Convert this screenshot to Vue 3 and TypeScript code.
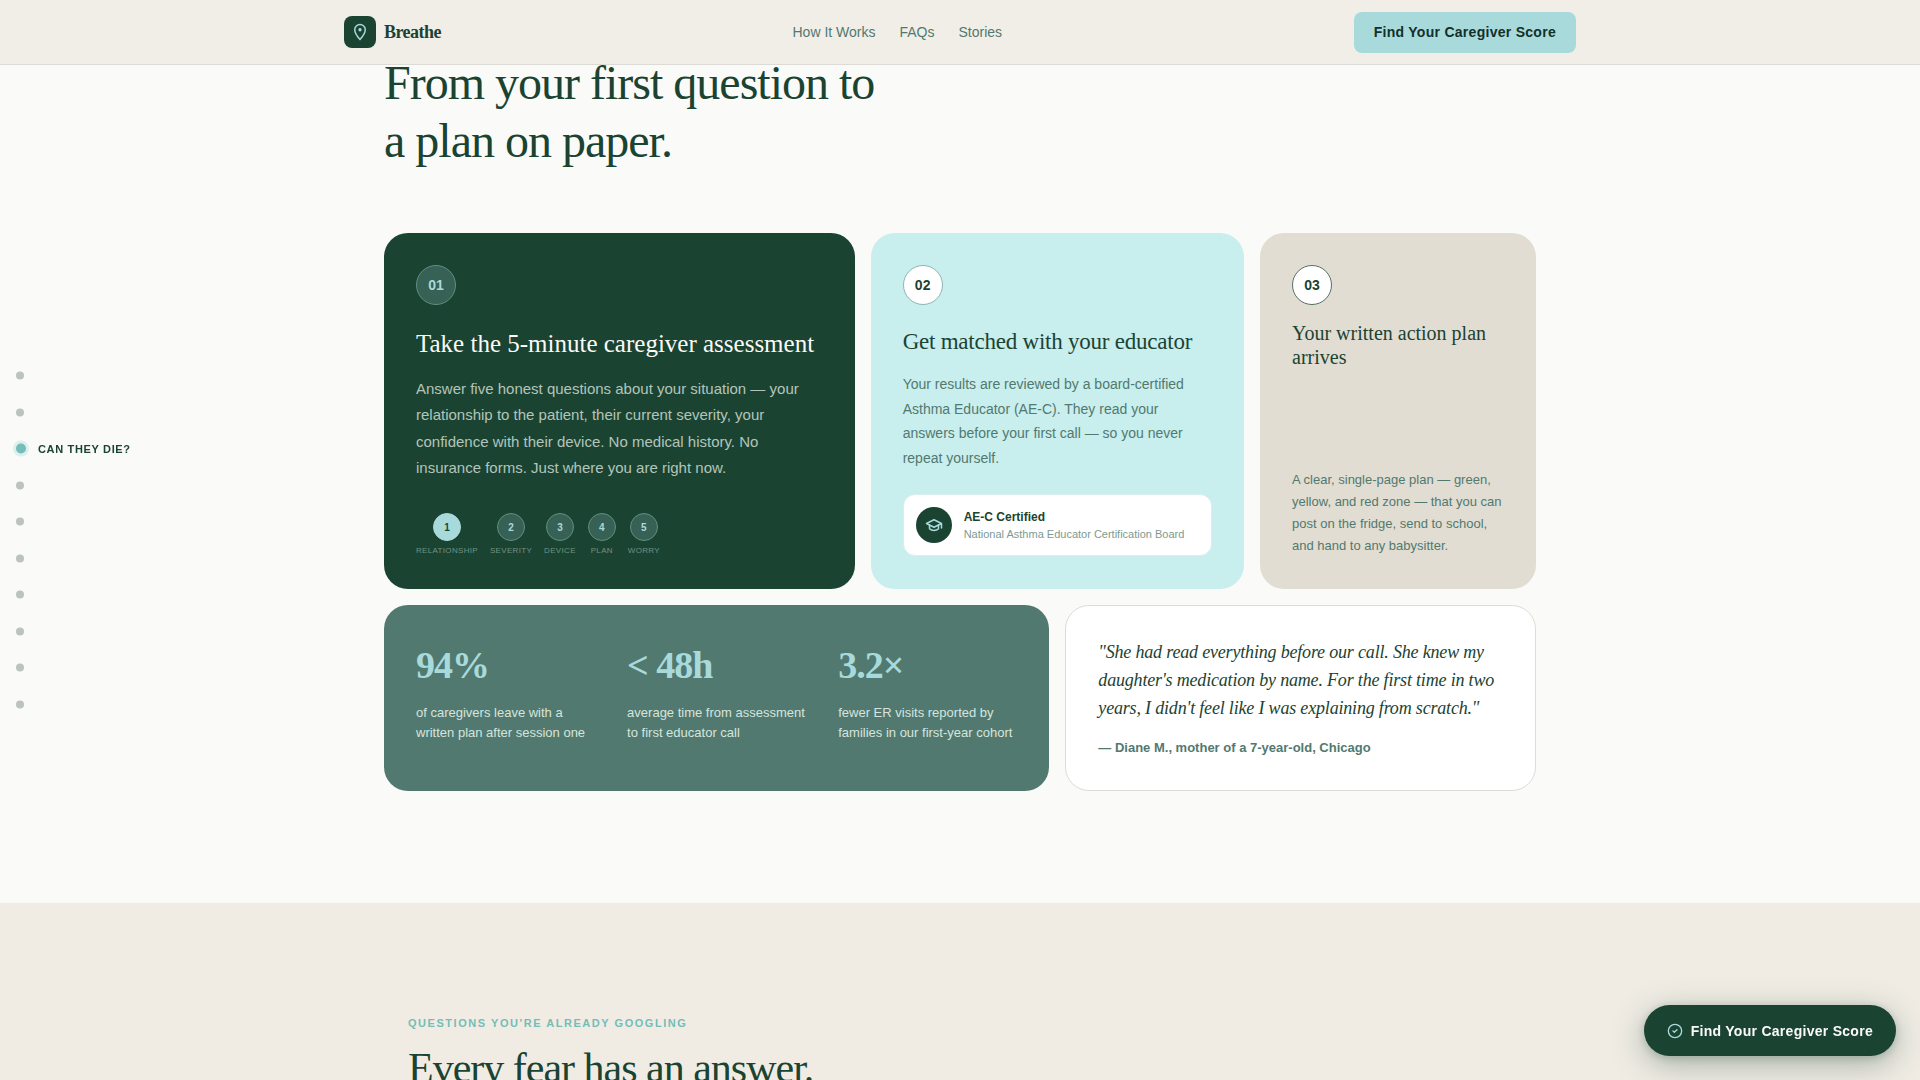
<script setup lang="ts">
interface Stat {
  value: string
  label: string
}

const navLinks = [
  { text: 'How It Works', href: '#how-it-works' },
  { text: 'FAQs', href: '#faqs' },
  { text: 'Stories', href: '#stories' },
]

const chapterCount = 10
const activeChapter = 3
const activeChapterLabel = 'Can they die?'

const steps: string[] = ['Relationship', 'Severity', 'Device', 'Plan', 'Worry']

const stats: Stat[] = [
  { value: '94%', label: 'of caregivers leave with a written plan after session one' },
  { value: '< 48h', label: 'average time from assessment to first educator call' },
  { value: '3.2×', label: 'fewer ER visits reported by families in our first-year cohort' },
]
</script>

<template>
  <div class="page">
    <header class="topbar">
      <div class="topbar-inner">
        <a class="brand" href="#top">
          <span class="brand-mark">
            <svg width="18" height="18" viewBox="0 0 24 24" fill="none" stroke="currentColor" stroke-width="2">
              <path d="M12 2C8.13 2 5 5.13 5 9c0 5.25 7 13 7 13s7-7.75 7-13c0-3.87-3.13-7-7-7z" />
              <circle cx="12" cy="9" r="2.2" fill="currentColor" stroke="none" />
            </svg>
          </span>
          <span class="brand-name">Breathe</span>
        </a>
        <nav class="links">
          <a v-for="link in navLinks" :key="link.text" :href="link.href">{{ link.text }}</a>
        </nav>
        <button type="button" class="cta">Find Your Caregiver Score</button>
      </div>
    </header>

    <nav class="chapters" aria-label="Chapters">
      <a
        v-for="n in chapterCount"
        :key="n"
        class="chapter"
        :class="{ active: n === activeChapter }"
        :href="`#chapter-${n}`"
      >
        <span class="dot"></span>
        <span v-if="n === activeChapter" class="chapter-label">{{ activeChapterLabel }}</span>
      </a>
    </nav>

    <main>
      <section id="how-it-works" class="process">
        <div class="process-inner">
          <h2 class="process-title">From your first question to<br />a plan on paper.</h2>

          <div class="bento">
            <article class="card card-assess">
              <span class="num">01</span>
              <h3>Take the 5-minute caregiver assessment</h3>
              <p>
                Answer five honest questions about your situation — your relationship to the patient,
                their current severity, your confidence with their device. No medical history. No
                insurance forms. Just where you are right now.
              </p>
              <ol class="steps">
                <li v-for="(step, i) in steps" :key="step" :class="{ current: i === 0 }">
                  <span class="step-dot">{{ i + 1 }}</span>
                  <span class="step-label">{{ step }}</span>
                </li>
              </ol>
            </article>

            <article class="card card-match">
              <span class="num">02</span>
              <h3>Get matched with your educator</h3>
              <p>
                Your results are reviewed by a board-certified Asthma Educator (AE-C). They read your
                answers before your first call — so you never repeat yourself.
              </p>
              <div class="badge">
                <span class="badge-icon">
                  <svg width="18" height="18" viewBox="0 0 24 24" fill="none" stroke="currentColor" stroke-width="2" stroke-linecap="round" stroke-linejoin="round">
                    <path d="M22 10v6M2 10l10-5 10 5-10 5z" />
                    <path d="M6 12v5c3 3 9 3 12 0v-5" />
                  </svg>
                </span>
                <div class="badge-text">
                  <strong>AE-C Certified</strong>
                  <span>National Asthma Educator Certification Board</span>
                </div>
              </div>
            </article>

            <article class="card card-plan">
              <span class="num">03</span>
              <h3>Your written action plan arrives</h3>
              <p>
                A clear, single-page plan — green, yellow, and red zone — that you can post on the
                fridge, send to school, and hand to any babysitter.
              </p>
            </article>

            <div class="card card-stats">
              <div v-for="stat in stats" :key="stat.value" class="stat">
                <div class="stat-value">{{ stat.value }}</div>
                <div class="stat-label">{{ stat.label }}</div>
              </div>
            </div>

            <figure id="stories" class="card card-quote">
              <blockquote>
                "She had read everything before our call. She knew my daughter's medication by name.
                For the first time in two years, I didn't feel like I was explaining from scratch."
              </blockquote>
              <figcaption>— Diane M., mother of a 7-year-old, Chicago</figcaption>
            </figure>
          </div>
        </div>
      </section>

      <section id="faqs" class="faqs">
        <div class="faqs-inner">
          <p class="eyebrow">Questions you're already googling</p>
          <h2 class="faqs-title">Every fear has an answer.</h2>
        </div>
      </section>
    </main>

    <button type="button" class="fab">
      <svg width="16" height="16" viewBox="0 0 24 24" fill="none" stroke="currentColor" stroke-width="2" stroke-linecap="round" stroke-linejoin="round">
        <circle cx="12" cy="12" r="10" />
        <path d="m9 12 2 2 4-4" />
      </svg>
      Find Your Caregiver Score
    </button>
  </div>
</template>

<style>
body {
  margin: 0;
  background: #fafaf8;
}
</style>

<style scoped>
.page {
  --forest: #1b4332;
  --sage: #52796f;
  --aqua: #a8dadc;
  --teal: #74bdb8;
  --serif: 'Liberation Serif', serif;
  height: 100vh;
  overflow-y: auto;
  scrollbar-width: none;
  background: #fafaf8;
  color: var(--forest);
  font-family: 'Liberation Sans', sans-serif;
}

.page *,
.page *::before {
  box-sizing: border-box;
}

a {
  color: inherit;
  text-decoration: none;
}

button {
  border: 0;
  font: inherit;
  cursor: pointer;
}

h2,
h3,
p,
ol,
figure,
blockquote {
  margin: 0;
  padding: 0;
}

h2,
h3 {
  font-family: var(--serif);
  font-weight: 400;
}

.topbar {
  position: fixed;
  top: 0;
  left: 0;
  right: 0;
  z-index: 10;
  background: #f1eee7;
  border-bottom: 1px solid #dcdbd5;
}

.topbar-inner {
  display: flex;
  align-items: center;
  justify-content: space-between;
  max-width: 1280px;
  height: 64px;
  margin: 0 auto;
  padding: 0 24px;
}

.brand {
  display: flex;
  align-items: center;
  gap: 8px;
}

.brand-mark {
  display: grid;
  place-items: center;
  width: 32px;
  height: 32px;
  border-radius: 8px;
  background: var(--forest);
  color: var(--aqua);
}

.brand-name {
  font-family: var(--serif);
  font-size: 18px;
  font-weight: 700;
  letter-spacing: -0.03em;
}

.links {
  display: flex;
  gap: 24px;
  font-size: 14px;
  color: var(--sage);
}

.cta {
  height: 41px;
  padding: 0 20px;
  border-radius: 8px;
  background: var(--aqua);
  color: #12302a;
  font-size: 14px;
  font-weight: 700;
  letter-spacing: 0.02em;
}

.chapters {
  position: fixed;
  left: 16px;
  top: 50%;
  z-index: 5;
  display: flex;
  flex-direction: column;
  gap: 20px;
  transform: translateY(-50%);
}

.chapter {
  display: flex;
  align-items: center;
  gap: 12px;
  min-height: 1.5em;
  font-size: 11px;
  line-height: 1.5;
}

.dot {
  width: 8px;
  height: 8px;
  border-radius: 50%;
  background: #bcc3bf;
}

.active .dot {
  width: 10px;
  height: 10px;
  background: var(--teal);
  box-shadow: 0 0 0 3px #dcefef;
}

.chapter-label {
  font-weight: 700;
  letter-spacing: 0.06em;
  text-transform: uppercase;
}

.process {
  padding: 54px 64px 112px;
}

.process-inner {
  max-width: 1152px;
  margin: 0 auto;
}

.process-title {
  margin-bottom: 63px;
  font-size: 48px;
  line-height: 58px;
  letter-spacing: -1px;
}

.bento {
  display: grid;
  grid-template-columns: repeat(12, minmax(0, 1fr));
  gap: 16px;
}

.card {
  display: flex;
  flex-direction: column;
  padding: 32px;
  border-radius: 24px;
}

.num {
  display: grid;
  place-items: center;
  flex-shrink: 0;
  width: 40px;
  height: 40px;
  margin-bottom: 24px;
  border: 1px solid;
  border-radius: 50%;
  background: #fff;
  font-size: 14px;
  font-weight: 700;
}

.card-assess {
  grid-column: span 5;
  background: var(--forest);
  color: #fafaf8;
}

.card-assess .num {
  background: #376154;
  border-color: #5f8f80;
  color: var(--aqua);
}

.card-assess h3 {
  margin-bottom: 18px;
  font-size: 25px;
  line-height: 29px;
}

.card-assess p {
  margin-bottom: 32px;
  color: #b3c5ba;
  font-size: 15px;
  line-height: 1.75;
}

.steps {
  display: flex;
  gap: 12px;
  list-style: none;
}

.steps li {
  display: flex;
  flex-direction: column;
  align-items: center;
  gap: 4px;
}

.step-dot {
  display: grid;
  place-items: center;
  width: 28px;
  height: 28px;
  border: 1px solid #5f8f80;
  border-radius: 50%;
  background: #376154;
  color: var(--aqua);
  font-size: 10px;
  font-weight: 700;
}

.current .step-dot {
  border-color: var(--aqua);
  background: var(--aqua);
  color: var(--forest);
}

.step-label {
  color: #6f9383;
  font-size: 8px;
  line-height: 12px;
  letter-spacing: 0.04em;
  text-transform: uppercase;
}

.card-match {
  grid-column: span 4;
  background: #c8eeed;
}

.card-match .num {
  border-color: #8fb5b3;
}

.card-match h3 {
  margin-bottom: 18px;
  font-size: 23px;
  line-height: 25px;
  letter-spacing: -0.01em;
}

.card-match p {
  margin-bottom: 24px;
  color: var(--sage);
  font-size: 14px;
  line-height: 1.75;
}

.badge {
  display: flex;
  align-items: center;
  gap: 12px;
  padding: 12px;
  border: 1px solid #d9efee;
  border-radius: 12px;
  background: #fff;
}

.badge-icon {
  display: grid;
  place-items: center;
  width: 36px;
  height: 36px;
  border-radius: 50%;
  background: var(--forest);
  color: var(--aqua);
}

.badge-text {
  display: flex;
  flex-direction: column;
}

.badge-text strong {
  font-size: 12px;
  line-height: 18px;
}

.badge-text span {
  color: #7d9a92;
  font-size: 11px;
  line-height: 16px;
}

.card-plan {
  grid-column: span 3;
  background: #e1ddd2;
}

.card-plan .num {
  margin-bottom: 16px;
  border-color: #5b6f66;
}

.card-plan h3 {
  font-size: 20px;
  line-height: 24px;
}

.card-plan p {
  margin-top: auto;
  color: var(--sage);
  font-size: 13px;
  line-height: 22px;
}

.card-stats {
  grid-column: span 7;
  display: grid;
  grid-template-columns: repeat(3, minmax(0, 1fr));
  gap: 32px;
  background: var(--sage);
}

.stat-value {
  margin-bottom: 10px;
  color: var(--aqua);
  font-family: var(--serif);
  font-size: 38px;
  font-weight: 700;
  line-height: 56px;
  letter-spacing: -1px;
}

.stat-label {
  color: #d5e5de;
  font-size: 13px;
  line-height: 20px;
}

.card-quote {
  grid-column: span 5;
  border: 1px solid #dddcd6;
  background: #fff;
}

.card-quote blockquote {
  margin-bottom: 16px;
  font-family: var(--serif);
  font-size: 18px;
  font-style: italic;
  line-height: 28px;
  letter-spacing: -0.01em;
}

.card-quote figcaption {
  color: var(--sage);
  font-size: 13px;
  font-weight: 700;
  line-height: 20px;
}

.faqs {
  padding: 112px 64px;
  background: #f0ece4;
}

.faqs-inner {
  max-width: 1104px;
  margin: 0 auto;
}

.eyebrow {
  margin-bottom: 12px;
  color: var(--teal);
  font-size: 11px;
  font-weight: 700;
  line-height: 16px;
  letter-spacing: 0.14em;
  text-transform: uppercase;
}

.faqs-title {
  font-size: 42px;
  line-height: 50px;
  letter-spacing: -1px;
}

.fab {
  position: fixed;
  right: 24px;
  bottom: 24px;
  z-index: 10;
  display: flex;
  align-items: center;
  gap: 8px;
  height: 51px;
  padding: 0 23px;
  border-radius: 26px;
  background: var(--forest);
  box-shadow: 0 8px 32px rgba(27, 67, 50, 0.35), 0 2px 8px rgba(27, 67, 50, 0.2);
  color: #fafaf8;
  font-size: 14px;
  font-weight: 700;
  letter-spacing: 0.02em;
}

.fab svg {
  color: var(--aqua);
}
</style>
